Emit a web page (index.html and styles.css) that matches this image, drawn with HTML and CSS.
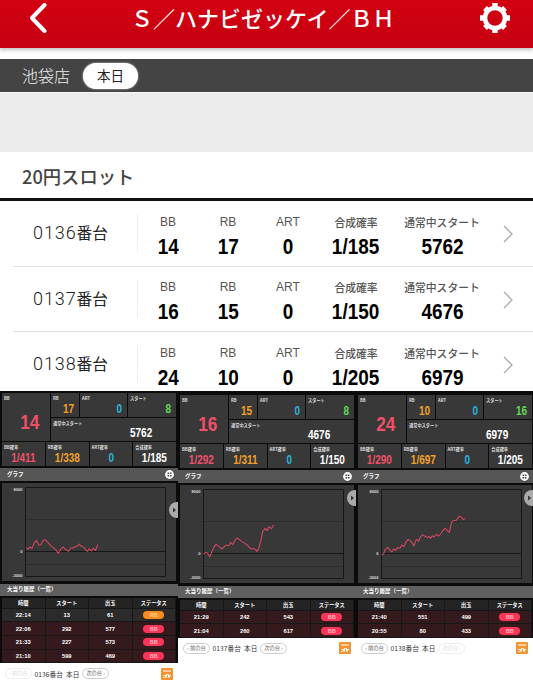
FILE: index.html
```html
<!DOCTYPE html>
<html lang="ja">
<head>
<meta charset="utf-8">
<title>S／ハナビゼッケイ／BH</title>
<link rel="stylesheet" href="styles.css">
</head>
<body>
<header class="topbar">
  <svg class="back" viewBox="0 0 18 30"><path d="M15.5 2 3 15l12.500 13" /></svg>
  <h1>Ｓ／ハナビゼッケイ／ＢＨ</h1>
  <svg class="gear" viewBox="0 0 32 32">
    <circle class="ring" cx="16" cy="16" r="10" />
    <path class="teeth" d="M16 5V1M16 31v-4M5 16H1M31 16h-4M8.200 8.200 6 6M26 26l-2.200-2.200M8.200 23.800 6 26M26 6l-2.200 2.200" />
  </svg>
</header>
<div class="store"><span class="store-name">池袋店</span><span class="today">本日</span></div>
<div class="spacer"></div>
<h2 class="rate">20円スロット</h2>
<main class="list" id="list"></main>
<section class="panels" id="panels"></section>
<script src="script.js"></script>
</body>
</html>
```
FILE: styles.css
```css
* { box-sizing: border-box; }
body {
  margin: 0;
  width: 533px;
  height: 680px;
  overflow: hidden;
  background: #fff;
  font-family: "Noto Sans CJK JP", sans-serif;
  color: #222;
}
.topbar {
  position: relative;
  height: 48px;
  display: flex;
  align-items: center;
  background: linear-gradient(#d30211, #c50012);
  box-shadow: 0 2px 4px rgba(0, 0, 0, .25);
  padding: 0 22px 12px 29px;
}
.back { width: 18px; height: 30px; fill: none; stroke: #fff; stroke-width: 4; stroke-linecap: round; stroke-linejoin: round; }
h1 { margin: 0 0 2px 84px; font-size: 22px; line-height: 34px; font-weight: 500; color: #fff; white-space: nowrap; }
.gear { width: 32px; height: 32px; margin-left: auto; fill: none; stroke: #fff; flex: none; }
.ring { stroke-width: 4.6; }
.teeth { stroke-width: 5.4; }
.store {
  margin-top: 11px;
  height: 33px;
  display: flex;
  align-items: center;
  background: #444;
  padding-left: 22px;
}
.store-name { width: 61px; font-size: 16px; line-height: 33px; font-weight: 300; color: #eee; }
.today {
  width: 55px;
  height: 26px;
  border-radius: 13px;
  background: #fff;
  box-shadow: 0 0 2px #ddd;
  font-size: 13.5px;
  line-height: 25px;
  text-align: center;
}
.spacer { height: 60px; background: #ebebeb; border-top: 1px solid #f6f6f6; }
.rate {
  margin: 0;
  height: 49px;
  padding-left: 22px;
  border-bottom: 3px solid #111;
  font-size: 18.3px;
  line-height: 48px;
  font-weight: 500;
  color: #444;
}
.list { height: 190px; overflow: hidden; }
.row {
  height: 65.5px;
  margin-left: 13px;
  border-bottom: 1px solid #e0e0e0;
  display: flex;
  align-items: center;
}
.machine {
  width: 125px;
  height: 38px;
  padding-left: 20px;
  border-right: 1px solid #eee;
  font-size: 15.7px;
  line-height: 38px;
}
.machine b { font: 300 18px "Roboto", sans-serif; letter-spacing: .9px; }
.stat { width: 60px; text-align: center; display: flex; flex-direction: column; align-items: center; white-space: nowrap; padding-top: 6px; }
.stat.prob { width: 76px; }
.stat.start { width: 96px; }
.stat small { font: 12px/16px "Liberation Sans", sans-serif; color: #555; }
.stat.prob small, .stat.start small { font: 500 10.8px/16px "Noto Sans CJK JP", sans-serif; }
.num, .val {
  font-family: "Liberation Sans", sans-serif;
  font-weight: 700;
}
.num { transform: scaleX(.86); font-size: 22px; line-height: 24px; margin-top: 5px; color: #000; }
.chev { width: 12px; height: 18px; margin: 2px 0 0 12px; fill: none; stroke: #aaa; stroke-width: 1.3; }

.panels { display: grid; grid-template-columns: 178px 178px 177px; align-items: start; color: #fff; height: 289px; background: #fff; }
.panel { position: relative; background: #0b0b0b; }
.panel .body { padding: 2px 2px 0; }
.panel.low .body { padding-top: 4px; }
.cells { display: grid; grid-template-columns: 48px 28px 47px 48px; grid-template-rows: 23.5px 23.5px; gap: 1px; }
.probs { display: grid; grid-template-columns: repeat(4, 1fr); gap: 1px; margin-top: 1px; width: 174px; }
.cell { position: relative; background: #383838; height: 100%; display: flex; flex-direction: column; justify-content: space-between; min-width: 0; }
.probs .cell { height: 23.5px; }
.cell small { font-size: 4.2px; line-height: 6px; font-weight: 700; padding: 2px 0 0 2px; color: #ddd; white-space: nowrap; }
.val { transform: scaleX(.82); font-size: 12.2px; line-height: 13px; text-align: right; padding-right: 6px; transform-origin: right; margin-bottom: 1px; white-space: nowrap; }
.big { grid-row: span 2; }
.big .val { font-size: 21px; line-height: 22px; padding-right: 13px; margin-bottom: 8px; }
.wide { grid-column: span 3; }
.wide .val { padding-right: 29px; }
.probs .val { text-align: center; padding: 0; transform-origin: center; }
.red { color: #ef5068; }
.orange { color: #f2a02c; }
.blue { color: #2bb3da; }
.green { color: #62d855; }
.bar {
  height: 13px;
  display: flex;
  align-items: center;
  justify-content: space-between;
  padding: 0 4px 0 7px;
  background: #565656;
  font-size: 5.5px;
  line-height: 13px;
  font-weight: 700;
}
.graph-bar { margin-top: 2.5px; }
.grid-icon { width: 9px; height: 9px; }
.graph { padding: 2px 2px 0; height: 102.5px; background: #0b0b0b; position: relative; }
.graph svg.plot { display: block; width: 174px; height: 98px; background: #383838; }
.frame { fill: none; stroke: #171717; stroke-width: 1; }
.faint { stroke: #292929; stroke-width: .8; }
.axis { font: 700 4px "Liberation Sans", sans-serif; fill: #ddd; text-anchor: end; }
.trend { fill: none; stroke: #d54861; stroke-width: 3.2; stroke-linejoin: round; }
.handle { position: absolute; right: 0; top: 21px; width: 9px; height: 16px; border-radius: 8px 0 0 8px; background: #aaa; }
.handle svg { display: block; width: 9px; height: 16px; }
.low .handle { top: 7px; }
.history-bar { height: 12px; background: #5f5f5f; }
table { width: 174px; margin: 2.5px 2px 0; border-collapse: separate; border-spacing: 0; table-layout: fixed; font-size: 5.8px; text-align: center; }
th, td { padding: 0; border-right: 1px solid #171717; border-bottom: 1px solid #171717; font-weight: 700; }
th { height: 10.5px; line-height: 9px; background: #242424; font-size: 5.2px; }
td { height: 13.7px; line-height: 12px; background: #34191d; font-family: "Liberation Sans", sans-serif; }
tr.rb td { background: #2b2b2b; }
.tag { display: block; width: 21px; height: 8px; margin: 0 auto; border-radius: 4px; background: #fb3558; font-size: 5.5px; line-height: 8.5px; color: #ffb9c4; }
.rb .tag { background: #f98c1d; color: #ffd09a; }
.foot {
  display: flex;
  align-items: center;
  height: 21px;
  background: #fff;
  padding: 0 5px 0 5px;
  font-size: 6.6px;
  color: #333;
  white-space: nowrap;
}
.pager { width: 27px; height: 11px; border: 1px solid #ccc; border-radius: 6px; font-size: 5.3px; line-height: 8.5px; text-align: center; color: #666; }
.pager.off { color: #ddd; border-color: #eee; }
.current { width: 50px; text-align: center; letter-spacing: .1px; }
.share { width: 12px; height: 12px; margin-left: auto; }
```
FILE: script.js
```js
const machines = [
  { no: '0136', bb: 14, rb: 17, start: 8, prob: '1/185', normal: 5762, pb: '1/411', pr: '1/338',
    shift: 'translate(-2 -3)',
    line: '78,203 84,207 90,202 96,205 102,190 109,181 116,194 122,195 128,184 134,179 140,183 146,190 152,197 160,203 167,209 175,220 182,208 189,201 196,208 206,214 212,204 220,204 226,199 232,199 238,192 244,199 252,202 258,211 263,214 268,206 274,213 280,205 286,211 290,203 293,194',
    hits: [['22:14', 13, 61, 'RB'], ['22:06', 292, 577, 'BB'], ['21:33', 227, 573, 'BB'], ['21:10', 599, 469, 'BB']] },
  { no: '0137', bb: 16, rb: 15, start: 8, prob: '1/150', normal: 4676, pb: '1/292', pr: '1/311',
    shift: 'translate(-3 -5)',
    line: '80,222 86,217 92,220 98,230 103,220 110,203 117,193 126,200 135,207 142,200 148,195 155,197 161,187 167,194 172,184 179,174 186,178 195,185 205,191 213,198 221,206 232,206 240,214 246,203 252,180 257,154 265,145 270,152 276,140 283,146 290,135',
    hits: [['21:29', 242, 543, 'BB'], ['21:04', 260, 617, 'BB']] },
  { no: '0138', bb: 24, rb: 10, start: 16, prob: '1/205', normal: 6979, pb: '1/290', pr: '1/697',
    shift: 'translate(-5 -5)',
    line: '86,225 92,221 97,208 104,202 110,209 116,216 122,207 128,211 134,203 140,205 147,195 153,200 158,187 165,178 172,182 178,190 183,198 188,182 192,179 197,183 203,170 209,164 216,169 223,173 228,169 233,175 238,167 243,171 250,163 257,168 265,159 272,149 277,145 283,152 289,157 295,129 300,122 310,121 318,109 325,111 331,119 337,115',
    hits: [['21:40', 551, 499, 'BB'], ['20:55', 80, 433, 'BB']] }
];

const stat = (label, value, cls = '') =>
  `<div class="stat ${cls}"><small>${label}</small><span class="num">${value}</span></div>`;
const cell = (label, value, color = '', cls = '') =>
  `<div class="cell ${cls}"><small>${label}</small><span class="val ${color}">${value}</span></div>`;

document.getElementById('list').innerHTML = machines.map(m => `
  <div class="row"><div class="machine"><b>${m.no}</b>番台</div>
    ${stat('BB', m.bb)}${stat('RB', m.rb)}${stat('ART', 0)}${stat('合成確率', m.prob, 'prob')}${stat('通常中スタート', m.normal, 'start')}
    <svg class="chev" viewBox="0 0 12 18"><path d="M2 1l8 8-8 8"/></svg>
  </div>`).join('');

document.getElementById('panels').innerHTML = machines.map((m, i) => `
  <article class="panel ${i ? 'low' : ''}">
    <div class="body">
      <div class="cells">
        ${cell('BB', m.bb, 'red', 'big')}${cell('RB', m.rb, 'orange')}${cell('ART', 0, 'blue')}${cell('スタート', m.start, 'green')}
        ${cell('通常中スタート', m.normal, '', 'wide')}
      </div>
      <div class="probs">
        ${cell('BB確率', m.pb, 'red')}${cell('RB確率', m.pr, 'orange')}${cell('ART確率', 0, 'blue')}${cell('合成確率', m.prob)}
      </div>
    </div>
    <div class="bar graph-bar">グラフ
      <svg class="grid-icon" viewBox="0 0 9 9"><circle cx="4.5" cy="4.5" r="4.4" fill="#fff"/><path d="M2.500 2.500h1.600v1.600H2.500zM4.900 2.500h1.600v1.600H4.900zM2.500 4.900h1.600v1.600H2.500zM4.900 4.900h1.600v1.600H4.900z" fill="#444"/></svg>
    </div>
    <div class="graph">
      <svg class="plot" viewBox="0 0 174 98">
        <path class="faint" d="M23.5 36.5h140M23.5 81.5h140"/>
        <path class="frame" d="M23.5 4.5h140v89h-140zM23.5 68.5h140"/>
        <text class="axis" x="20.5" y="7.5">8000</text><text class="axis" x="20.5" y="70">0</text><text class="axis" x="20.5" y="93.5">-3000</text>
        <g transform="${m.shift} scale(.3333)"><polyline class="trend" points="${m.line}"/></g>
      </svg>
      <div class="handle"><svg viewBox="0 0 9 16"><path d="M4 5.5 7 8l-3 2.5z" fill="#333"/></svg></div>
    </div>
    <div class="bar history-bar">大当り履歴（一覧）</div>
    <table>
      <tr><th>時間</th><th>スタート</th><th>出玉</th><th>ステータス</th></tr>
      ${m.hits.map(h => `<tr class="${h[3].toLowerCase()}"><td>${h[0]}</td><td>${h[1]}</td><td>${h[2]}</td><td><span class="tag">${h[3]}</span></td></tr>`).join('')}
    </table>
    <footer class="foot">
      <span class="pager ${i === 0 ? 'off' : ''}">‹ 前の台</span>
      <span class="current">${m.no}番台&nbsp;&nbsp;本日</span>
      <span class="pager ${i === 2 ? 'off' : ''}">次の台 ›</span>
      <svg class="share" viewBox="0 0 12 12"><rect width="12" height="12" rx="1" fill="#f39430"/><path d="M2 3h8M2 9.5h1.5M2.5 7.5h2v2M5.5 9.5v-3h2v3M8.5 9.5V7.5H10" fill="none" stroke="#fff" stroke-width="1"/></svg>
    </footer>
  </article>`).join('');
```
